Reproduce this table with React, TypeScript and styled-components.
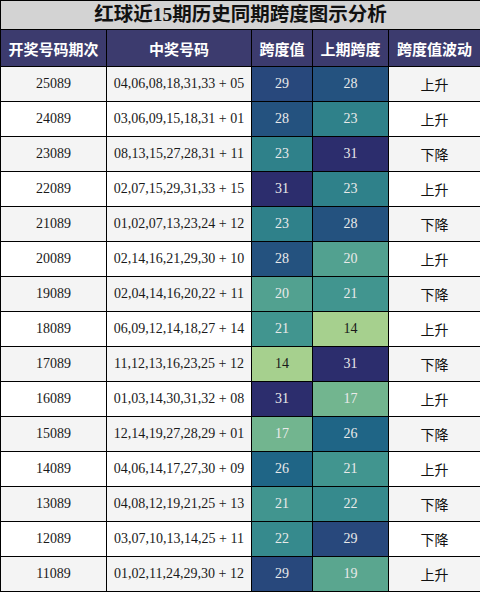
import React from "react";
import styled, { createGlobalStyle } from "styled-components";

const Global = createGlobalStyle`
  html, body { margin: 0; padding: 0; background: #ffffff; }
  body { font-family: "Liberation Serif", "Noto Sans CJK SC", serif; }
`;

const Table = styled.table`
  width: 480px;
  table-layout: fixed;
  border-collapse: collapse;
  font-family: "Liberation Serif", "Noto Sans CJK SC", serif;
`;

const TitleCell = styled.th`
  height: 28px;
  padding: 0;
  background: #d3d3d3;
  border: 1px solid #000;
  color: #111;
  font-size: 19.5px;
  font-weight: bold;
  text-align: center;
  line-height: 26px;
`;

const HeadCell = styled.th`
  height: 36px;
  padding: 0;
  background: #3c3b6e;
  border: 1px solid #000;
  color: #ffffff;
  font-family: "Noto Sans CJK SC", sans-serif;
  font-size: 15px;
  font-weight: bold;
  text-align: center;
`;

const Row = styled.tr<{ $alt: boolean }>`
  background: ${(p) => (p.$alt ? "#f4f4f4" : "#ffffff")};
`;

const Cell = styled.td`
  height: 34px;
  padding: 0;
  border: 1px solid #000;
  color: #1a1a1a;
  font-size: 14px;
  text-align: center;
  white-space: nowrap;
`;

const TrendCell = styled(Cell)`
  font-family: "Noto Sans CJK SC", sans-serif;
  font-size: 14px;
  color: #111;
`;

const HeatCell = styled(Cell)<{ $bg: string; $light: boolean }>`
  background: ${(p) => p.$bg};
  color: ${(p) => (p.$light ? "#1a1a1a" : "#eaeaea")};
`;

const heat: Record<number, string> = {
  14: "#a6d08e",
  17: "#72b58f",
  19: "#5aa68f",
  20: "#52a190",
  21: "#41958f",
  22: "#368a8d",
  23: "#2f818a",
  26: "#1f6586",
  28: "#24527f",
  29: "#28487c",
  31: "#2c2d6d",
};

const rows: [string, string, number, number, string][] = [
  ["25089", "04,06,08,18,31,33 + 05", 29, 28, "上升"],
  ["24089", "03,06,09,15,18,31 + 01", 28, 23, "上升"],
  ["23089", "08,13,15,27,28,31 + 11", 23, 31, "下降"],
  ["22089", "02,07,15,29,31,33 + 15", 31, 23, "上升"],
  ["21089", "01,02,07,13,23,24 + 12", 23, 28, "下降"],
  ["20089", "02,14,16,21,29,30 + 10", 28, 20, "上升"],
  ["19089", "02,04,14,16,20,22 + 11", 20, 21, "下降"],
  ["18089", "06,09,12,14,18,27 + 14", 21, 14, "上升"],
  ["17089", "11,12,13,16,23,25 + 12", 14, 31, "下降"],
  ["16089", "01,03,14,30,31,32 + 08", 31, 17, "上升"],
  ["15089", "12,14,19,27,28,29 + 01", 17, 26, "下降"],
  ["14089", "04,06,14,17,27,30 + 09", 26, 21, "上升"],
  ["13089", "04,08,12,19,21,25 + 13", 21, 22, "下降"],
  ["12089", "03,07,10,13,14,25 + 11", 22, 29, "下降"],
  ["11089", "01,02,11,24,29,30 + 12", 29, 19, "上升"],
];

export default function App() {
  return (
    <>
      <Global />
      <Table>
        <colgroup>
          <col style={{ width: 106 }} />
          <col style={{ width: 145 }} />
          <col style={{ width: 61 }} />
          <col style={{ width: 76 }} />
          <col style={{ width: 92 }} />
        </colgroup>
        <thead>
          <tr>
            <TitleCell colSpan={5}>红球近15期历史同期跨度图示分析</TitleCell>
          </tr>
          <tr>
            <HeadCell>开奖号码期次</HeadCell>
            <HeadCell>中奖号码</HeadCell>
            <HeadCell>跨度值</HeadCell>
            <HeadCell>上期跨度</HeadCell>
            <HeadCell>跨度值波动</HeadCell>
          </tr>
        </thead>
        <tbody>
          {rows.map(([issue, nums, span, prev, trend], i) => (
            <Row key={issue} $alt={i % 2 === 0}>
              <Cell>{issue}</Cell>
              <Cell>{nums}</Cell>
              <HeatCell $bg={heat[span]} $light={span <= 14}>{span}</HeatCell>
              <HeatCell $bg={heat[prev]} $light={prev <= 14}>{prev}</HeatCell>
              <TrendCell>{trend}</TrendCell>
            </Row>
          ))}
        </tbody>
      </Table>
    </>
  );
}
